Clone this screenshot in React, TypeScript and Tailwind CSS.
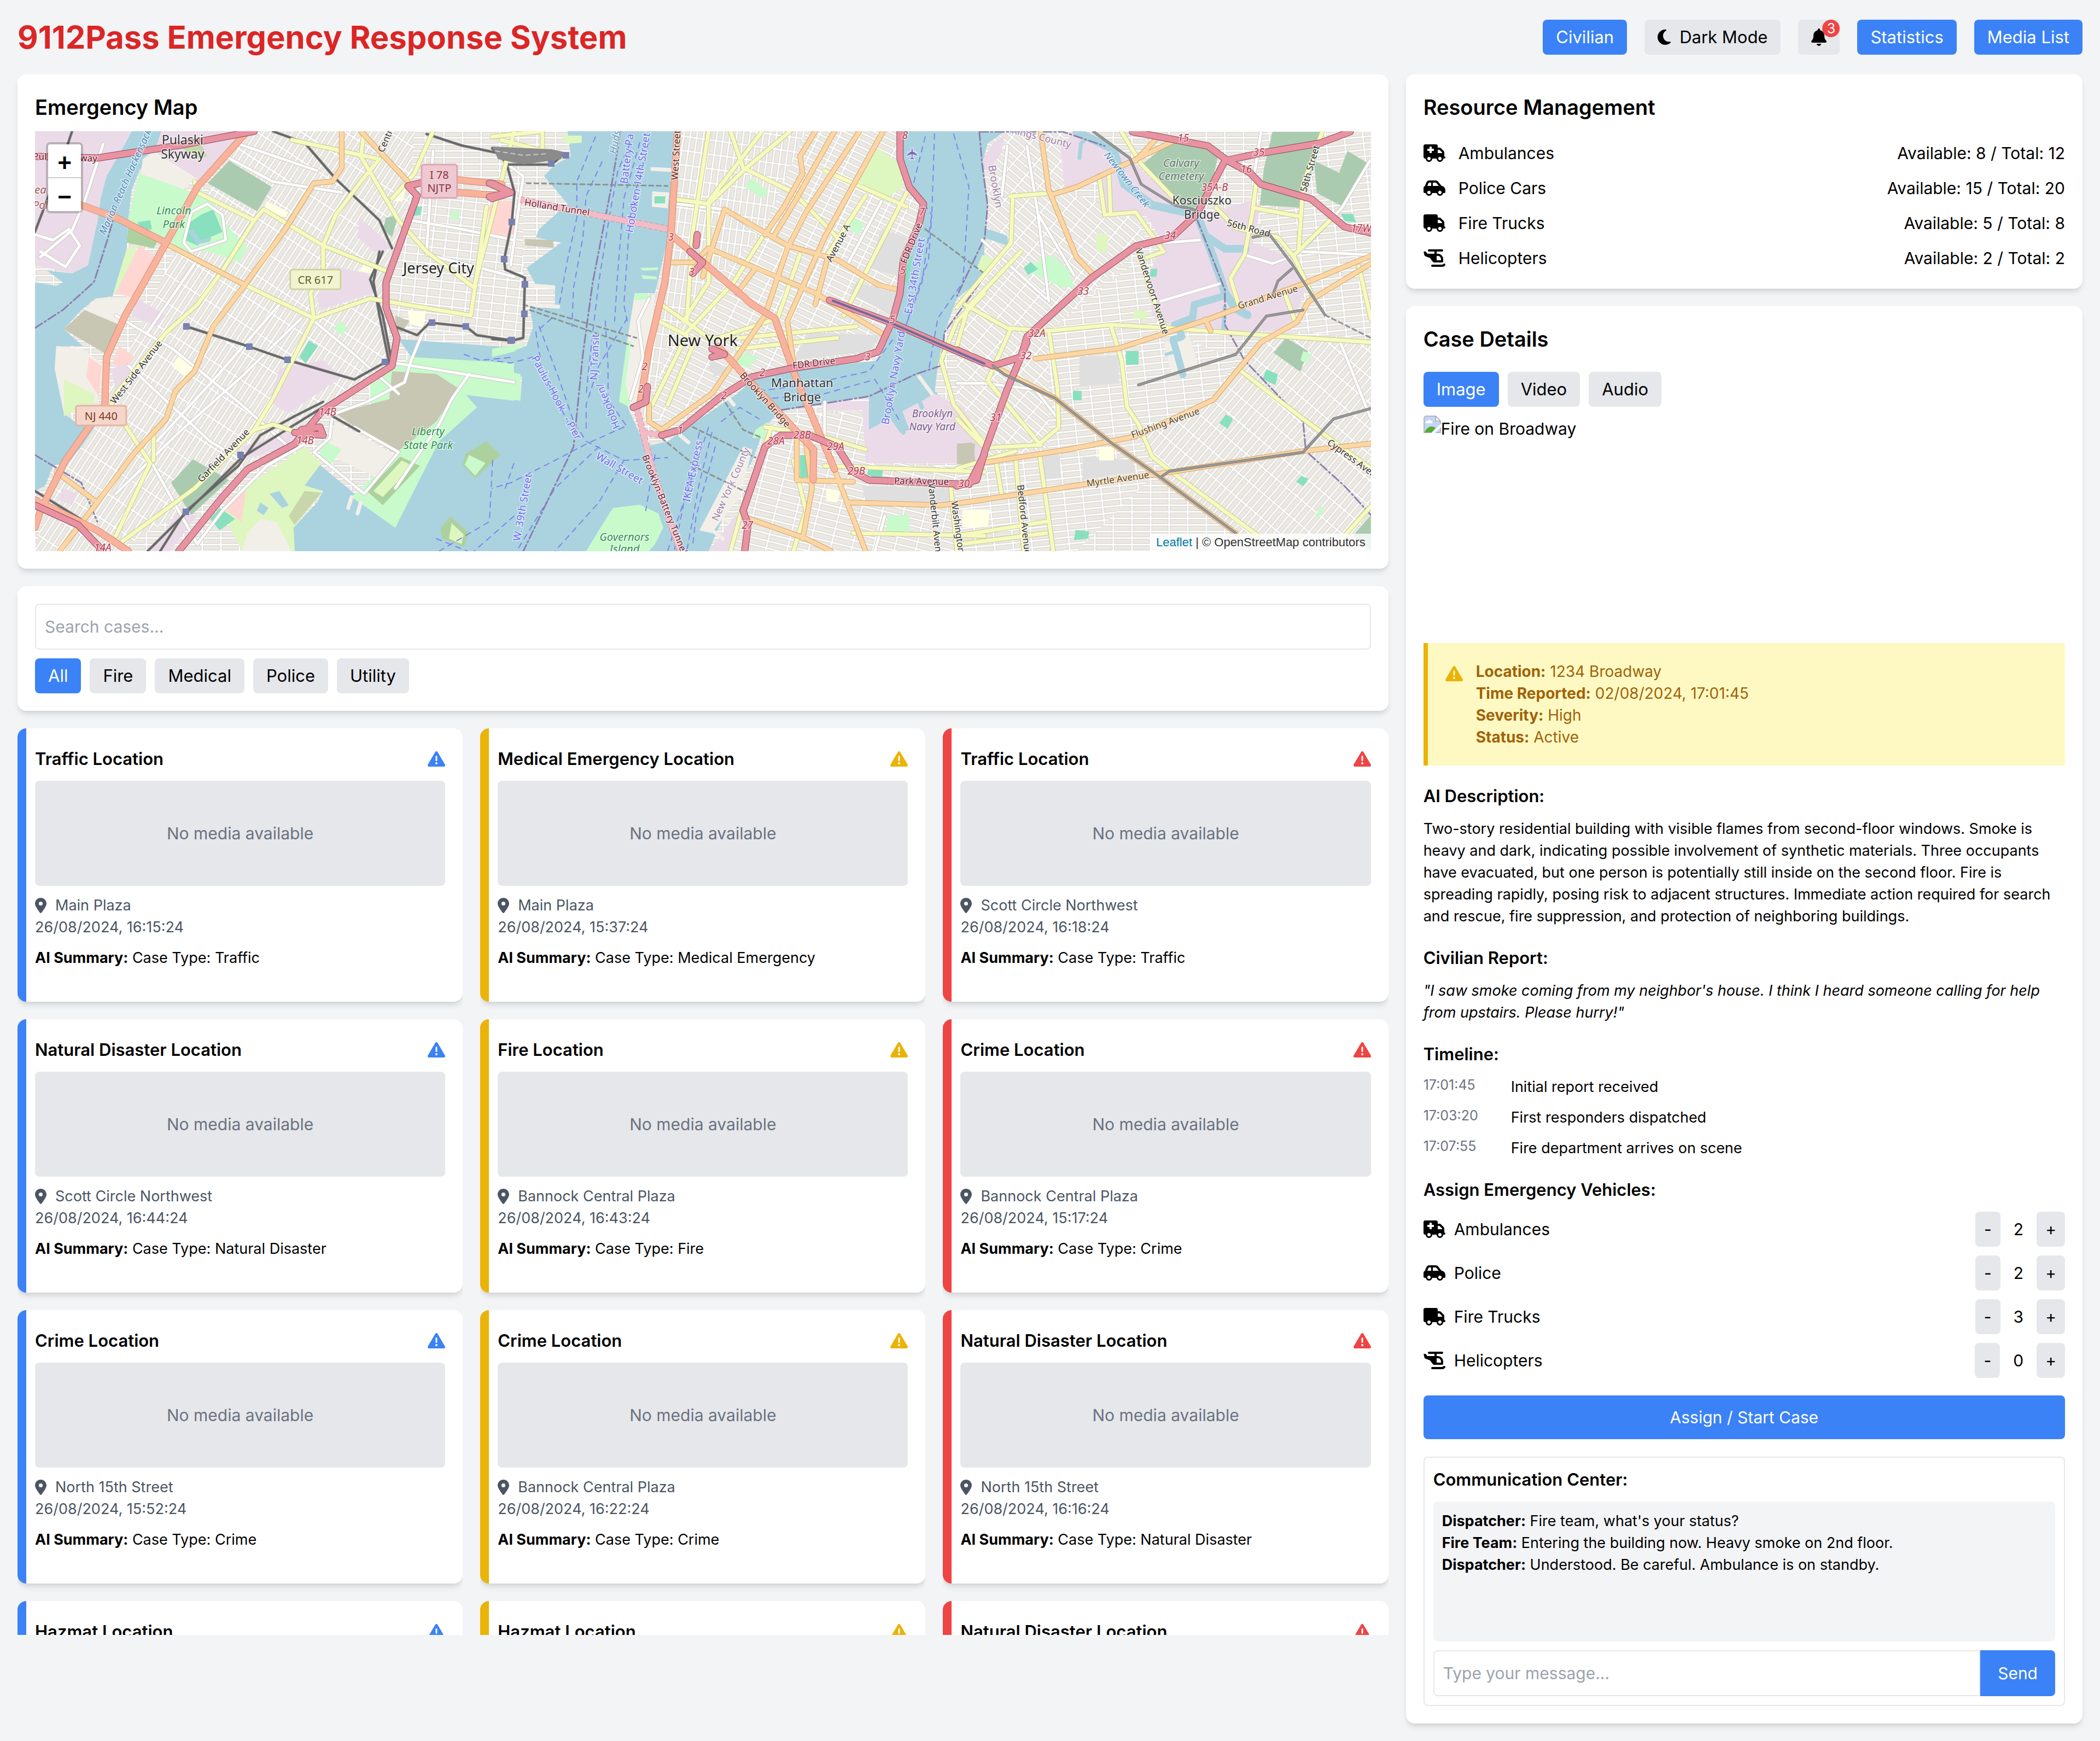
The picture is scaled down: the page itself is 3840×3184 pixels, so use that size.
import { useState } from "react";
import type { ReactNode } from "react";
import {
  FaBell,
  FaCarSide,
  FaHelicopter,
  FaLocationDot,
  FaMoon,
  FaTriangleExclamation,
  FaTruck,
  FaTruckMedical,
} from "react-icons/fa6";

type TileKey = "w" | "c" | "e";

// each tile has its own units, project() puts them on the shared canvas
const TILES = {
  w: { x: -24, y: -10, sx: 0.574, sy: 0.5102 },
  c: { x: 836, y: -10, sx: 0.574, sy: 0.5102 },
  e: { x: 1686, y: -10, sx: 0.5102, sy: 0.5357 },
};

function project(tile: TileKey, points: string) {
  const t = TILES[tile];
  return points
    .split(" ")
    .map((p) => {
      const [x, y] = p.split(",").map(Number);
      return `${Math.round(x * t.sx + t.x)},${Math.round(y * t.sy + t.y)}`;
    })
    .join(" ");
}

const COLORS = {
  water: "#aad3df",
  park: "#c8facc",
  golf: "#def6c0",
  wood: "#add19e",
  cemetery: "#aacbaf",
  industrial: "#ebdbe8",
  brown: "#c7c7b4",
  retail: "#ffd6d1",
  land: "#f2efe9",
  pitch: "#88e0be",
  grey: "#e0dfdf",
  scrub: "#c8d7ab",
  school: "#ffffe5",
};

type Area = [TileKey, keyof typeof COLORS, string];

const DISTRICTS: [TileKey, string, string][] = [
  ["w", "gridJersey", "260,1000 500,420 700,20 1250,20 1240,240 1150,600 1180,860 900,1060 520,1380 300,1525 42,1525 100,1250 240,1070"],
  ["w", "gridDowntown", "1240,240 1568,240 1568,770 1200,720 1160,600"],
  ["c", "gridDowntown", "0,240 100,240 100,780 0,770"],
  ["c", "gridWestSide", "590,20 1000,20 860,380 700,560 560,790 490,1050 440,1000 520,600 560,380"],
  ["c", "gridManhattan", "1000,20 1300,20 1310,200 1370,300 1330,440 1290,700 1230,830 950,850 720,960 560,1060 500,1040 560,790 700,560 860,380"],
  ["c", "gridBrooklyn", "870,1080 960,1040 1180,1020 1190,1200 1568,1230 1568,1525 700,1525 800,1340"],
  ["e", "gridWilliamsburg", "120,20 380,20 400,230 640,300 680,400 330,700 330,1100 0,1160 0,580 100,370"],
  ["e", "gridFlat", "330,700 700,420 760,700 1000,800 920,930 640,1060 720,1180 350,1525 0,1525 0,1160 330,1100"],
  ["e", "gridBushwick", "760,1180 640,1060 920,930 1010,820 1100,720 1484,730 1484,1525 1080,1451 720,1200"],
  ["e", "gridFlat", "1080,20 1484,20 1484,730 1200,700 1180,420 1050,300"],
];

const AREAS: Area[] = [
  // New Jersey side
  ["w", "industrial", "42,20 350,20 325,70 270,180 250,260 240,350 235,370 210,500 160,530 42,500"],
  ["w", "industrial", "445,20 700,20 640,120 560,210 375,160 430,70"],
  ["w", "land", "385,120 420,90 560,190 500,240 380,170"],
  ["w", "scrub", "500,75 570,60 590,110 560,115"],
  ["w", "park", "375,170 545,240 560,200 590,260 620,290 640,340 720,440 690,490 600,450 500,450 350,380 340,330"],
  ["w", "wood", "340,350 440,400 420,440 335,420"],
  ["w", "golf", "335,440 370,430 320,560 290,610"],
  ["w", "pitch", "370,345 410,340 415,370 380,380"],
  ["w", "pitch", "530,350 570,320 610,300 640,380 600,400 560,430 520,410"],
  ["w", "water", "530,380 545,370 570,410 605,400 600,415 560,425"],
  ["w", "cemetery", "660,125 797,220 750,305 592,205"],
  ["w", "retail", "375,430 425,470 350,615 300,600"],
  ["w", "land", "235,620 350,615 315,715 200,660"],
  ["w", "brown", "200,660 315,715 270,820 135,730"],
  ["w", "land", "110,790 195,800 265,860 240,990 135,1030 105,870"],
  ["w", "golf", "135,910 230,960 230,1000 135,1040"],
  ["w", "retail", "215,830 255,860 245,970 205,900"],
  ["w", "retail", "310,790 360,830 320,870 290,850"],
  ["w", "industrial", "285,870 340,850 370,900 300,960"],
  ["w", "industrial", "370,620 460,680 430,720 350,680"],
  ["w", "school", "500,825 552,860 520,900 478,860"],
  ["w", "school", "780,270 850,310 840,330 770,300"],
  ["w", "school", "1090,500 1130,515 1110,530 1070,520"],
  ["w", "industrial", "1075,330 1140,390 1180,440 1120,450 1070,400"],
  ["w", "industrial", "980,500 1100,530 1120,600 950,660 940,610"],
  ["w", "school", "1190,230 1225,220 1215,270 1180,270"],
  ["w", "pitch", "1240,290 1275,290 1270,320 1235,325"],
  ["w", "cemetery", "1160,330 1200,320 1180,400 1150,370"],
  ["w", "park", "1365,305 1395,305 1392,335 1365,335"],
  ["w", "retail", "1490,290 1568,280 1568,390 1485,400"],
  ["w", "park", "1015,700 1040,730 1010,750 995,725"],
  ["w", "pitch", "915,770 945,790 905,850 885,830"],
  ["w", "industrial", "820,870 960,840 1020,900 850,1030 790,990"],
  ["w", "school", "1230,665 1285,665 1280,725 1235,710"],
  ["w", "brown", "1190,680 1235,700 1210,740 1190,730"],
  ["w", "industrial", "700,1150 880,1090 900,1130 730,1190"],
  ["w", "cemetery", "545,1195 660,1270 540,1395 475,1280"],
  ["w", "park", "1110,930 1240,830 1568,850 1568,985 1415,965 1450,1010 1330,1130 1190,1440 1050,1330 1200,1170 1110,1060"],
  ["w", "brown", "1180,880 1320,890 1390,940 1320,1060 1190,1175 1110,1120 1000,1030 1170,980"],
  ["w", "land", "1000,1060 1190,1180 1130,1260 960,1170"],
  ["w", "park", "960,1125 1020,1160 985,1215 950,1180"],
  ["w", "wood", "1205,1185 1268,1220 1150,1360 1100,1310"],
  ["w", "golf", "1210,1200 1245,1220 1150,1330 1120,1310"],
  ["w", "golf", "900,1150 955,1210 900,1290 960,1310 865,1440 870,1525 700,1525 640,1380 720,1290"],
  ["w", "water", "790,1320 820,1310 850,1360 830,1370"],
  ["w", "water", "760,1350 785,1370 770,1395 750,1380"],
  ["w", "scrub", "900,1310 955,1315 870,1430 850,1400"],
  ["w", "retail", "660,1330 715,1310 700,1420 640,1370"],
  ["w", "pitch", "630,1370 680,1410 630,1450 600,1410"],
  ["w", "land", "760,1410 810,1420 860,1525 700,1525 720,1460"],
  ["w", "industrial", "500,1380 560,1400 470,1525 410,1525"],
  ["w", "industrial", "130,1300 180,1320 160,1360 115,1340"],
  ["w", "wood", "1415,1175 1480,1130 1525,1180 1445,1265 1405,1215"],
  ["w", "park", "1425,1180 1478,1210 1445,1255 1412,1215"],
  ["w", "wood", "1365,1400 1425,1460 1410,1510 1340,1480 1335,1440"],
  ["w", "golf", "1370,1425 1408,1465 1400,1500 1360,1480"],
  ["c", "park", "0,870 90,890 90,985 0,970"],
  ["c", "park", "0,800 110,780 70,810 0,830"],
  // Manhattan
  ["c", "golf", "220,35 285,35 285,60 240,65"],
  ["c", "retail", "0,270 70,270 70,390 0,390"],
  ["c", "brown", "105,405 195,410 195,438 105,430"],
  ["c", "land", "510,235 565,240 560,295 508,290"],
  ["c", "pitch", "518,252 553,252 550,278 518,278"],
  ["c", "park", "470,510 530,508 528,518 480,520"],
  ["c", "park", "475,535 525,540 525,550 480,548"],
  ["c", "park", "825,188 880,235 865,260 805,220"],
  ["c", "golf", "1230,80 1300,140 1310,220 1240,270 1160,190"],
  ["c", "park", "1150,325 1185,350 1170,390 1140,375"],
  ["c", "grey", "1160,560 1290,600 1270,680 1140,600"],
  ["c", "grey", "1240,370 1320,400 1300,540 1200,510"],
  ["c", "grey", "1010,740 1240,750 1200,810 960,840"],
  ["c", "land", "455,600 520,605 490,1000 440,1030 415,960 430,770"],
  ["c", "park", "455,600 510,605 505,622 455,625"],
  ["c", "park", "430,770 445,775 425,920 440,1010 405,990 415,900"],
  ["c", "pitch", "1325,460 1338,470 1325,560 1315,560"],
  ["c", "park", "790,810 850,830 810,870 780,850"],
  ["c", "grey", "700,840 760,870 710,900 690,870"],
  ["c", "park", "385,1370 470,1358 530,1390 545,1440 520,1500 500,1525 300,1525 340,1450"],
  // Brooklyn and Queens
  ["c", "park", "840,1090 880,1060 870,1120 830,1120"],
  ["c", "industrial", "1060,990 1200,985 1200,1090 1410,960 1500,1010 1568,1130 1568,1210 1190,1210 1180,1020 1060,1020"],
  ["c", "water", "1330,905 1350,890 1395,960 1375,985"],
  ["c", "water", "1225,980 1290,970 1330,1090 1300,1100"],
  ["c", "brown", "1485,1140 1530,1135 1540,1200 1490,1205"],
  ["c", "pitch", "980,1180 1015,1180 1010,1260 980,1260"],
  ["c", "pitch", "1200,1220 1245,1230 1240,1270 1195,1250"],
  ["c", "park", "1260,1395 1330,1395 1330,1455 1255,1455"],
  ["c", "school", "1065,1300 1110,1310 1100,1350 1065,1345"],
  ["c", "grey", "1180,1290 1460,1300 1470,1350 1190,1350"],
  ["c", "land", "700,1460 660,1450 800,1150 830,1160 790,1330 740,1400"],
  ["c", "industrial", "770,1405 800,1380 760,1525 690,1525"],
  ["e", "industrial", "90,120 130,60 170,30 160,90 110,160"],
  ["e", "industrial", "370,60 420,30 500,30 640,130 800,270 860,310 1040,260 1090,270 1060,400 1200,450 1250,560 1190,700 1000,700 760,680 700,650 690,500 740,400 680,310 530,300 510,170 400,230 385,200"],
  ["e", "cemetery", "770,50 940,80 900,260 830,290 665,130"],
  ["e", "cemetery", "1130,20 1300,20 1285,110 1230,280 1085,270 1100,150"],
  ["e", "cemetery", "1400,85 1478,130 1380,275 1290,230 1280,120 1370,160"],
  ["e", "cemetery", "1180,725 1258,770 1230,840 1135,775"],
  ["e", "cemetery", "1484,1330 1484,1451 1420,1400"],
  ["e", "park", "335,440 400,490 420,550 370,550 240,490"],
  ["e", "pitch", "265,465 290,490 255,510 240,485"],
  ["e", "golf", "90,440 150,460 110,510 70,490"],
  ["e", "golf", "500,370 540,370 540,430 500,430"],
  ["e", "pitch", "695,490 718,488 715,515 690,515"],
  ["e", "golf", "640,630 685,635 680,665 625,655"],
  ["e", "grey", "440,790 580,780 580,880 440,890"],
  ["e", "pitch", "605,770 650,770 650,815 605,815"],
  ["e", "pitch", "415,905 447,905 447,938 415,938"],
  ["e", "grey", "310,1120 370,1125 370,1200 310,1205"],
  ["e", "grey", "450,1130 630,1140 640,1180 450,1210"],
  ["e", "school", "505,1095 563,1095 563,1143 510,1143"],
  ["e", "pitch", "425,1380 475,1385 470,1410 420,1415"],
  ["e", "brown", "0,1085 65,1085 60,1155 0,1155"],
  ["e", "school", "20,1310 120,1310 110,1370 20,1370"],
  ["e", "pitch", "1110,830 1150,850 1140,885 1095,865"],
  ["e", "pitch", "965,985 990,1000 970,1035 940,1015"],
  ["e", "pitch", "1235,1195 1260,1205 1240,1230 1215,1215"],
  ["e", "pitch", "1375,300 1420,300 1430,330 1390,325"],
  ["e", "park", "1240,770 1275,780 1250,810 1230,800"],
  ["e", "park", "1305,1300 1318,1308 1295,1340 1283,1330"],
  ["e", "land", "740,740 835,720 865,820 770,850"],
];

const WATER: [TileKey, string][] = [
  ["w", "350,20 445,20 430,70 400,120 375,160 350,230 340,330 335,440 325,490 290,612 235,620 190,660 135,730 195,790 115,790 105,870 135,900 135,1030 175,1065 235,1075 190,1150 150,1205 100,1220 75,1290 42,1310 42,560 110,575 130,560 80,520 160,530 210,500 235,370 185,315 240,350 250,260 270,180 325,70"],
  ["w", "870,1525 865,1440 940,1350 960,1310 900,1290 910,1240 950,1215 1190,1440 1260,1270 1330,1130 1450,1010 1415,965 1568,985 1568,1525"],
  ["w", "1200,765 1568,795 1568,865 1460,860 1240,830"],
  ["c", "240,20 580,20 565,380 520,600 455,600 440,740 415,920 440,1030 490,1150 560,1130 650,1060 780,960 850,890 1010,870 1230,840 1290,700 1330,440 1375,300 1310,180 1300,20 1568,20 1568,540 1480,620 1440,740 1420,860 1410,960 1200,1090 1200,970 920,1020 870,1080 830,1200 760,1340 690,1525 0,1525 0,980 90,980 95,900 0,870 0,830 110,790 130,720 120,650 200,640 200,580 140,570 110,510 220,420 140,400 150,370 240,280 165,180 200,140 250,110"],
  ["c", "1290,930 1340,890 1420,960 1390,990 1430,1140 1370,1110 1300,1170 1240,1110 1280,1050 1220,1000"],
  ["e", "0,20 170,20 110,60 90,130 110,250 100,350 180,375 185,410 105,385 60,500 0,580"],
  ["w", "460,255 490,255 485,310 460,300"],
];

const CREEKS: [TileKey, number, string][] = [
  ["e", 15, "430,20 560,80 600,200 700,270 860,305 900,400 945,520 960,570 1000,625 1040,645"],
  ["e", 14, "900,380 960,420 1035,420"],
  ["e", 13, "960,580 850,610 845,655 780,680"],
  ["e", 13, "800,700 805,720 775,730 790,780 810,850"],
  ["e", 6, "790,770 750,780"],
  ["e", 8, "960,620 955,700"],
  ["e", 7, "440,110 445,60 470,40"],
  ["c", 8, "1330,900 1370,1010"],
  ["c", 8, "1250,960 1310,1100"],
];

// piers along the Hudson and East River
const PIERS: [TileKey, string][] = [
  ["c", "510,155 575,158"],
  ["c", "100,570 195,578"],
  ["c", "100,640 210,648"],
  ["c", "740,960 770,1000"],
  ["c", "600,1110 625,1135"],
  ["c", "690,1440 735,1480"],
  ["c", "710,1390 755,1420"],
  ["c", "1360,900 1400,960"],
  ["w", "1490,520 1560,540"],
  ["w", "1050,1330 1040,1370"],
  ["w", "1080,1350 1070,1390"],
];

type RoadKind = "motorway" | "trunk" | "primary" | "secondary" | "minor" | "rail" | "tunnel" | "subway";

const ROAD_STYLE: Record<RoadKind, { color: string; casing: string; width: number; dash?: string }> = {
  minor: { color: "#ffffff", casing: "#c9c6c2", width: 5 },
  tunnel: { color: "#f1bcc6", casing: "#e6808f", width: 10, dash: "6 4" },
  rail: { color: "#666666", casing: "#8a8a8a", width: 3 },
  secondary: { color: "#f7fabf", casing: "#c3c98a", width: 7 },
  primary: { color: "#fcd6a4", casing: "#d2a566", width: 8 },
  trunk: { color: "#f9b29c", casing: "#d98a70", width: 11 },
  motorway: { color: "#e892a2", casing: "#8d4a58", width: 11 },
  subway: { color: "#999999", casing: "#7d7d7d", width: 3 },
};

const ROADS: [RoadKind, TileKey, string][] = [
  ["minor", "w", "260,65 200,270 160,375 60,470"],
  ["minor", "w", "42,390 100,410 150,370 185,430 140,505 60,450"],
  ["minor", "w", "680,60 940,160"],
  ["minor", "w", "650,110 800,200 1020,240"],
  ["minor", "w", "560,480 400,740"],
  ["minor", "w", "300,680 480,800 700,1000 850,1150"],
  ["minor", "w", "340,860 600,1130 700,1200"],
  ["minor", "w", "890,690 700,900 500,1100 300,1320"],
  ["minor", "w", "820,640 620,900 430,1130"],
  ["minor", "w", "930,700 1060,820 1200,960"],
  ["minor", "w", "1568,410 1400,370 1240,340"],
  ["minor", "w", "1310,90 1290,460 1568,540"],
  ["minor", "w", "590,280 640,320 650,410 540,450 515,420 540,310 590,280"],
  ["minor", "w", "1000,1030 1100,990 1220,920 1240,840 1290,710"],
  ["minor", "w", "1425,890 1370,980 1330,1070 1190,1300"],
  ["minor", "w", "1190,850 1568,920"],
  ["minor", "w", "990,1030 980,1120 930,1170 1090,1320 1200,1170 1060,1080"],
  ["minor", "w", "410,1200 560,1500"],
  ["minor", "w", "900,1140 780,1220 640,1380 560,1500"],
  ["minor", "c", "60,500 100,180 50,140"],
  ["minor", "c", "590,280 740,300 860,390"],
  ["minor", "c", "1240,270 1130,500"],
  ["minor", "c", "1060,990 1060,1180"],
  ["minor", "c", "1250,1400 1220,1525"],
  ["minor", "c", "500,620 465,700 480,830 440,980"],
  ["minor", "e", "180,70 160,240"],
  ["minor", "e", "250,70 290,300 330,600"],
  ["minor", "e", "290,300 420,510"],
  ["minor", "e", "90,390 320,590"],
  ["minor", "e", "1090,20 1060,200"],
  ["minor", "e", "1370,730 1484,1000"],
  ["minor", "e", "1480,120 1380,280 1230,430 1484,440"],
  ["minor", "e", "1030,440 1130,470 1190,450"],
  ["minor", "e", "740,400 870,390"],
  ["minor", "e", "730,600 940,540"],
  ["minor", "e", "0,880 100,880 280,900 370,1010"],

  ["tunnel", "c", "90,265 330,320 560,370"],
  ["tunnel", "c", "460,1010 480,1100 540,1110"],
  ["tunnel", "c", "480,1100 510,1230 600,1525"],

  ["rail", "w", "160,20 130,120 42,380"],
  ["rail", "w", "800,20 900,60 1000,190 1140,340 1180,440"],
  ["rail", "w", "1150,450 1110,550 1150,680 1180,850 1000,980 700,1190 400,1525"],
  ["rail", "w", "1140,450 1120,560 1140,680 1170,850"],
  ["rail", "w", "525,720 725,792 850,840 1060,910 1157,848"],
  ["rail", "w", "1180,715 1260,750 1300,705 1415,720 1450,750 1568,770"],
  ["rail", "w", "960,990 870,1040 760,1110 690,1220 520,1385 440,1525"],
  ["rail", "w", "1290,30 1400,70 1568,110"],
  ["rail", "w", "42,1310 200,1420 340,1525"],
  ["rail", "w", "990,1040 1075,1095"],
  ["rail", "c", "0,80 50,140 190,140 230,100"],
  ["rail", "c", "47,140 72,240 62,345 38,480 42,515 104,545 100,760 62,770 0,765"],
  ["subway", "e", "490,20 620,110 660,200 780,270 860,290"],
  ["subway", "e", "1060,380 1120,370 1200,470 1320,645"],
  ["subway", "e", "650,885 800,840 1000,780 1110,650 1240,630"],
  ["subway", "e", "1200,490 1150,530 1130,580"],

  ["secondary", "w", "550,200 560,240 740,340 640,520 560,640 460,740 300,960 285,1000 410,1210 300,1470"],
  ["secondary", "w", "740,340 770,300 960,430 1160,520"],
  ["secondary", "w", "860,50 1140,120 1080,200 1000,320 960,430 960,520 920,600 930,690 800,980 740,1090 550,1300 320,1490"],
  ["secondary", "w", "1090,20 1080,110 1200,340 1290,450 1440,580 1568,20"],
  ["secondary", "w", "1310,20 1250,170 1180,260"],
  ["secondary", "w", "710,570 930,690 1110,620 1430,680 1480,290"],
  ["secondary", "w", "740,1090 800,1070 880,1100"],
  ["secondary", "w", "420,1090 420,1200"],
  ["secondary", "c", "0,40 160,20 160,90 30,50"],
  ["secondary", "c", "690,20 640,380 620,700"],
  ["secondary", "c", "760,20 800,150 960,240 1100,400"],
  ["secondary", "c", "860,20 690,270 690,560 610,700"],
  ["secondary", "c", "950,20 810,150 690,280 590,265"],
  ["secondary", "c", "1060,160 1320,290"],
  ["secondary", "c", "1320,240 1120,680"],
  ["secondary", "c", "1190,250 1070,460"],
  ["secondary", "c", "860,400 770,560 620,740"],
  ["secondary", "c", "980,460 910,690 720,760"],
  ["secondary", "c", "540,640 690,760 790,760 1160,720"],
  ["secondary", "c", "530,700 620,750 510,1000"],
  ["secondary", "c", "780,800 1100,760"],
  ["secondary", "c", "650,760 560,1000"],
  ["secondary", "c", "870,1080 1040,1110 1190,1160"],
  ["secondary", "c", "960,1200 1000,1380 960,1525"],
  ["secondary", "c", "1060,1220 1568,1240"],
  ["secondary", "c", "890,1080 800,1360 760,1525"],
  ["secondary", "c", "1150,1460 1568,1470"],
  ["secondary", "c", "1460,1280 1480,1525"],
  ["secondary", "c", "1568,600 1480,700 1430,840 1470,1000 1568,1140"],
  ["secondary", "e", "590,20 660,130 790,260"],
  ["secondary", "e", "190,240 340,230"],
  ["secondary", "e", "200,240 195,400 0,620"],
  ["secondary", "e", "230,430 40,620 0,750"],
  ["secondary", "e", "510,170 530,305 640,295 740,430 680,450"],
  ["secondary", "e", "545,170 550,300"],
  ["secondary", "e", "650,430 700,580 750,700"],
  ["secondary", "e", "30,610 180,690 330,700 550,680 760,690 1100,715 1484,740"],
  ["secondary", "e", "190,700 110,870 300,1090"],
  ["secondary", "e", "330,700 360,900 365,1030 290,1090"],
  ["secondary", "e", "550,680 590,800 610,960 650,1020 700,1130 780,1190 1080,1400"],
  ["secondary", "e", "1075,180 1060,290 1030,440 980,520 1010,610"],
  ["secondary", "e", "930,280 1000,350 1150,380 1210,450 1280,590"],
  ["secondary", "e", "1310,20 1240,200 1225,420"],
  ["secondary", "e", "1060,280 1230,310"],
  ["secondary", "e", "1340,320 1210,440"],
  ["secondary", "e", "1440,480 1484,660"],
  ["secondary", "e", "1010,830 1240,1000 1484,1170"],
  ["secondary", "e", "1484,1300 1380,1410"],
  ["secondary", "e", "1170,560 1210,660"],
  ["secondary", "e", "0,1000 100,1100 290,1090"],
  ["secondary", "e", "0,1170 210,1110"],
  ["secondary", "e", "140,1140 160,1260"],
  ["secondary", "e", "210,1130 240,1451"],
  ["secondary", "e", "295,1120 345,1451"],
  ["secondary", "e", "0,1400 330,1350"],
  ["secondary", "e", "0,1430 320,1390"],

  ["primary", "w", "1020,20 1020,150 990,200 930,205 840,370 710,570 610,720 550,880 490,950 460,1050 360,1170 240,1350 120,1525"],
  ["primary", "w", "470,430 710,570"],
  ["primary", "w", "1080,20 1230,200"],
  ["primary", "w", "110,1240 240,1350"],
  ["primary", "c", "740,300 940,430 1100,480 1230,570 1300,590"],
  ["primary", "c", "740,300 670,540"],
  ["primary", "c", "1030,20 980,110 990,170 930,290 870,390"],
  ["primary", "c", "1090,20 970,260 900,390"],
  ["primary", "c", "1170,20 1000,310 940,440 870,680 700,960 540,1090 500,1060 500,1000"],
  ["primary", "c", "1245,20 1060,400 940,700 960,850"],
  ["primary", "c", "560,490 640,490 690,440 840,510 1030,600 1250,750"],
  ["primary", "c", "840,510 780,600"],
  ["primary", "c", "1070,470 1030,640"],
  ["primary", "c", "970,1120 970,1270 1150,1275"],
  ["primary", "c", "1000,1140 1020,1300 990,1480"],
  ["primary", "c", "820,1410 1000,1480 1080,1525"],
  ["primary", "c", "1090,1230 1190,1525"],
  ["primary", "c", "1140,1350 1430,1360 1568,1340"],
  ["primary", "e", "300,20 330,220 430,450 490,510"],
  ["primary", "e", "780,50 650,110 430,210 340,235"],
  ["primary", "e", "720,40 640,120"],
  ["primary", "e", "1484,445 1240,540 900,660 580,760 280,795"],
  ["primary", "e", "890,660 910,700"],
  ["primary", "e", "1484,470 1260,600 1220,670 1090,740 1010,830 920,935 640,1060 400,1105 100,1150"],
  ["primary", "e", "0,1290 480,1220 720,1190 1240,1110 1484,1085"],
  ["primary", "e", "130,820 350,930 550,1080 730,1200 1000,1390"],

  ["subway", "e", "130,820 170,850 350,930 550,1080 730,1200 1000,1390"],
  ["subway", "e", "730,1200 760,1180 1240,1115 1350,1000 1484,965"],

  ["trunk", "w", "180,280 300,330 460,420 560,220 710,30"],
  ["trunk", "w", "460,420 390,560 330,680 270,830 265,1000 140,1200 60,1380 42,1440"],
  ["trunk", "w", "42,1340 240,1450 340,1525"],
  ["trunk", "w", "1390,195 1530,210"],
  ["trunk", "w", "1390,240 1530,250"],
  ["trunk", "c", "590,20 570,390 550,560 500,800 470,1000"],
  ["trunk", "c", "570,390 830,640 900,690 960,880 1090,1230"],
  ["trunk", "c", "720,790 800,890 980,1110 1025,1160 1022,1270"],

  ["motorway", "w", "42,110 240,115 500,70 740,20"],
  ["motorway", "w", "1290,200 1230,215 1260,250 1160,560 1160,650 1195,760 1180,860 960,1020 870,1140 720,1230 640,1330 500,1525"],
  ["motorway", "w", "870,1100 960,1110 950,1080 890,1090"],
  ["motorway", "w", "42,1360 180,1430 260,1525"],
  ["motorway", "w", "1490,205 1555,240 1490,255"],
  ["motorway", "c", "0,205 60,240 0,260"],
  ["motorway", "c", "630,450 670,490 640,530"],
  ["motorway", "c", "653,390 650,430"],
  ["motorway", "c", "495,935 490,990 450,1010"],
  ["motorway", "c", "700,800 740,820 700,830"],
  ["motorway", "c", "1300,20 1300,120 1330,220 1375,280 1360,350 1310,480 1300,600 1275,700 1230,810 1160,835 950,870 830,900 730,970 600,1090 540,1110"],
  ["motorway", "c", "805,1525 815,1430 800,1380 870,1150 920,1110 1010,1110 1100,1150 1150,1240 1200,1270 1520,1285 1568,1180"],
  ["motorway", "c", "1075,625 1280,710 1568,850"],
  ["motorway", "e", "0,765 130,820 230,790 250,720 480,520 640,410 770,380 860,300 960,120 1080,95 1300,60 1410,20"],
  ["motorway", "e", "630,20 900,70 970,120 1050,160 1090,200 1270,250 1390,345 1484,365"],
  ["motorway", "e", "250,740 180,900 100,1110 70,1210 0,1230"],
];

const FERRIES: [TileKey, string][] = [
  ["c", "330,40 270,200 270,330 240,480 215,640"],
  ["c", "350,130 300,250 290,400 260,580 255,720"],
  ["c", "440,60 400,160 375,320 340,560 320,740 300,960"],
  ["c", "470,60 420,260 400,520 390,700"],
  ["c", "500,60 440,300 420,640 430,700"],
  ["c", "360,700 370,860 370,980 430,1080"],
  ["c", "430,690 340,860 300,1000 300,1100"],
  ["c", "150,720 210,900 260,1060 300,1130 420,1200 560,1190"],
  ["c", "130,830 60,850 0,840"],
  ["c", "190,690 140,740 160,880 240,1060"],
  ["c", "420,1080 300,1140 200,1200 60,1280 0,1300"],
  ["c", "340,1150 200,1300 80,1520"],
  ["c", "420,1200 340,1350 200,1525"],
  ["c", "520,1180 490,1380"],
  ["c", "690,1080 640,1250 580,1450 560,1525"],
  ["c", "700,1100 660,1280 620,1525"],
  ["c", "660,1100 620,1300 580,1525"],
  ["c", "710,1150 650,1400 640,1500"],
  ["c", "730,1060 790,1010 850,1050"],
  ["c", "850,950 1000,930 1200,880 1280,760"],
  ["c", "860,980 1060,960 1220,910 1300,1060"],
  ["c", "1380,40 1340,220 1400,320 1390,480 1310,740"],
  ["c", "1410,30 1400,320 1370,560 1310,740"],
  ["c", "1470,30 1520,220 1500,560 1420,690 1390,880"],
  ["w", "1500,1200 1490,1420 1330,1525"],
  ["w", "1540,1300 1568,1210"],
  ["w", "1410,820 1460,840 1568,830"],
  ["w", "1320,1480 1420,1525"],
  ["w", "1568,1400 1440,1525"],
];

const BORDERS: [TileKey, string][] = [
  ["c", "410,20 380,220 320,560 290,820 260,1150 100,1525"],
  ["w", "42,725 130,660 230,560 275,400 300,300"],
  ["w", "42,1180 190,1280 240,1420"],
  ["c", "920,1020 1200,970 1350,890 1430,860 1440,740 1568,540"],
  ["e", "80,20 90,130 110,270 100,380 0,580"],
  ["e", "80,20 200,20 380,20 530,70"],
  ["e", "860,320 960,560 960,680 1030,800 1240,1010 1250,1110 1390,1230 1484,1330"],
];

const PATHS: [TileKey, string][] = [
  ["c", "110,205 560,215"],
  ["c", "100,640 460,760"],
  ["c", "120,660 450,790"],
  ["c", "1380,370 1568,530"],
  ["c", "540,1120 660,1230 820,1320"],
  ["c", "640,1080 840,1190"],
  ["c", "730,970 800,1090 860,1120"],
  ["e", "1320,645 1484,725"],
];

const STATIONS: [TileKey, string][] = [
  ["w", "525,720"], ["w", "725,792"], ["w", "846,838"], ["w", "1157,846"], ["w", "1307,705"],
  ["w", "1415,720"], ["w", "1558,770"], ["w", "697,1180"], ["w", "522,1384"],
  ["c", "63,345"], ["c", "38,478"], ["c", "104,568"], ["c", "102,674"], ["c", "62,768"],
  ["c", "188,136"], ["c", "236,105"],
];

// tile, anchor, text, size, colour, rotation, italic
type MapLabel = [TileKey, string, string, number, string, number, boolean?];

const LABELS: MapLabel[] = [
  ["w", "513,66", "Pulaski", 23, "#333", 0],
  ["w", "513,118", "Skyway", 23, "#333", 0],
  ["w", "212,128", "way", 17, "#6b2233", 2],
  ["w", "58,122", "Pul", 17, "#6b2233", 0],
  ["w", "340,205", "Marion Reach Hackensack", 18, "#4f8bbd", -66, true],
  ["w", "484,318", "Lincoln", 20, "#2e9050", 0, true],
  ["w", "484,366", "Park", 20, "#2e9050", 0, true],
  ["w", "60,244", "ea", 20, "#a45a5a", 0, true],
  ["w", "60,298", "Pol", 20, "#a45a5a", 0, true],
  ["w", "1328,530", "Jersey City", 27, "#222", 0],
  ["w", "372,890", "West Side Avenue", 17, "#333", -52],
  ["w", "650,1190", "Garfield Avenue", 17, "#333", -46],
  ["w", "974,1038", "14B", 19, "#b8384f", 0, true],
  ["w", "902,1140", "14B", 19, "#b8384f", 0, true],
  ["w", "258,1525", "14A", 19, "#b8384f", 0, true],
  ["w", "1294,1110", "Liberty", 20, "#2e9050", 0, true],
  ["w", "1294,1158", "State Park", 20, "#2e9050", 0, true],
  ["w", "1168,58", "Centr", 17, "#333", -66],
  ["c", "206,303", "Holland Tunnel", 17, "#6b2233", 9],
  ["c", "402,60", "Huds", 19, "#6f9fc0", -80, true],
  ["c", "440,120", "Battery Pa", 19, "#6c6cf0", -83],
  ["c", "476,205", "Hoboken 14th Street", 19, "#6c6cf0", -80],
  ["c", "596,105", "West Street", 17, "#5a2d22", -87],
  ["c", "1112,425", "Avenue A", 17, "#333", -62],
  ["c", "1345,425", "FDR Drive", 17, "#6b2233", -68],
  ["c", "1358,540", "East 34th Street", 19, "#6c6cf0", -80],
  ["c", "1290,905", "Brooklyn Navy Yard", 19, "#6c6cf0", -80],
  ["c", "670,790", "New York", 29, "#222", 0],
  ["c", "988,936", "Manhattan", 22, "#333", 0],
  ["c", "988,988", "Bridge", 22, "#333", 0],
  ["c", "1026,862", "FDR Drive", 17, "#6b2233", -7],
  ["c", "862,990", "Brooklyn Bridge", 17, "#5a2d22", 48],
  ["c", "540,1360", "Brooklyn-Battery Tunnel", 17, "#6b2233", 68],
  ["c", "170,930", "Paulus Hook", 19, "#6c6cf0", 62],
  ["c", "248,1090", "- Pier", 19, "#6c6cf0", 60],
  ["c", "380,1000", "Hoboken/", 19, "#6c6cf0", -112],
  ["c", "338,830", "NJ Transit", 19, "#6c6cf0", -88],
  ["c", "400,1238", "Wall Street", 19, "#6c6cf0", 30],
  ["c", "108,1370", "W. 39th Street", 19, "#6c6cf0", -80],
  ["c", "650,1240", "IKEA Express", 19, "#6c6cf0", -78],
  ["c", "770,1290", "New York County", 18, "#a07fa8", -66],
  ["c", "422,1488", "Governors", 20, "#2e9050", 0, true],
  ["c", "422,1530", "Island", 20, "#2e9050", 0, true],
  ["c", "1403,1045", "Brooklyn", 19, "#7d5f8c", 0, true],
  ["c", "1403,1092", "Navy Yard", 19, "#7d5f8c", 0, true],
  ["c", "1368,1286", "Park Avenue", 17, "#6b2233", 1],
  ["c", "1400,1405", "Vanderbilt Aven", 17, "#333", 84],
  ["c", "1474,1440", "Washington", 17, "#333", 82],
  ["c", "904,1142", "28A", 19, "#b8384f", 0, true],
  ["c", "988,1122", "28B", 19, "#b8384f", 0, true],
  ["c", "1094,1162", "29A", 19, "#b8384f", 0, true],
  ["c", "1160,1250", "29B", 19, "#b8384f", 0, true],
  ["c", "1504,1296", "30", 19, "#b8384f", 0, true],
  ["c", "814,1444", "27", 19, "#b8384f", 0, true],
  ["c", "486,876", "2", 19, "#b8384f", 0, true],
  ["c", "474,956", "2", 19, "#b8384f", 0, true],
  ["c", "738,980", "2", 19, "#b8384f", 0, true],
  ["c", "860,898", "2", 19, "#b8384f", 0, true],
  ["c", "600,1106", "1", 19, "#b8384f", 0, true],
  ["c", "570,412", "3", 19, "#b8384f", 0, true],
  ["c", "636,538", "3", 19, "#b8384f", 0, true],
  ["c", "1196,840", "3", 19, "#b8384f", 0, true],
  ["c", "1276,708", "5", 19, "#b8384f", 0, true],
  ["c", "1308,532", "5", 19, "#b8384f", 0, true],
  ["c", "1370,322", "7", 19, "#b8384f", 0, true],
  ["c", "1316,48", "8", 19, "#b8384f", 0, true],
  ["c", "1356,100", "✈", 28, "#8461c4", -90],
  ["e", "300,50", "Kings County", 18, "#a07fa8", 14],
  ["e", "125,210", "Brooklyn", 19, "#a07fa8", 80],
  ["e", "600,190", "Newtown Creek", 18, "#4f8bbd", 52, true],
  ["e", "804,140", "Calvary", 20, "#60796a", 0, true],
  ["e", "804,184", "Cemetery", 20, "#60796a", 0, true],
  ["e", "878,268", "Kosciuszko", 21, "#333", 0],
  ["e", "878,318", "Bridge", 21, "#333", 0],
  ["e", "1042,360", "56th Road", 17, "#333", 15],
  ["e", "1276,150", "58th Street", 17, "#333", -74],
  ["e", "690,570", "Vandervoort Avenue", 17, "#333", 72],
  ["e", "1118,596", "Grand Avenue", 17, "#5c4423", -17],
  ["e", "750,1025", "Flushing Avenue", 17, "#5c4423", -20],
  ["e", "578,1218", "Myrtle Avenue", 17, "#5c4423", -8],
  ["e", "1410,1145", "Cypress Aven", 17, "#333", 36],
  ["e", "230,1345", "Bedford Avenue", 17, "#333", 84],
  ["e", "812,54", "15", 19, "#b8384f", 0, true],
  ["e", "1082,102", "35", 19, "#b8384f", 0, true],
  ["e", "1036,160", "16", 19, "#b8384f", 0, true],
  ["e", "924,222", "35A-B", 19, "#b8384f", 0, true],
  ["e", "764,386", "34", 19, "#b8384f", 0, true],
  ["e", "452,576", "33", 19, "#b8384f", 0, true],
  ["e", "286,720", "32A", 19, "#b8384f", 0, true],
  ["e", "246,798", "32", 19, "#b8384f", 0, true],
  ["e", "140,1008", "31", 19, "#b8384f", 0, true],
  ["e", "1448,362", "17W", 19, "#b8384f", 0, true],
];

const STREET_GRIDS = [
  { id: "gridBase", angle: 0, w: 34, h: 12 },
  { id: "gridJersey", angle: -57, w: 44, h: 11 },
  { id: "gridDowntown", angle: 6, w: 24, h: 15 },
  { id: "gridWestSide", angle: -82, w: 26, h: 12 },
  { id: "gridManhattan", angle: 26, w: 34, h: 12 },
  { id: "gridBrooklyn", angle: 14, w: 38, h: 13 },
  { id: "gridWilliamsburg", angle: 40, w: 32, h: 12 },
  { id: "gridFlat", angle: -6, w: 34, h: 12 },
  { id: "gridBushwick", angle: -50, w: 36, h: 12 },
];

function Shield({ x, y, w, lines, fill, stroke, color }: {
  x: number;
  y: number;
  w: number;
  lines: string[];
  fill: string;
  stroke: string;
  color: string;
}) {
  return (
    <g>
      <rect x={x} y={y} width={w} height={lines.length * 25 + 11} rx={4} fill={fill} stroke={stroke} strokeWidth={3} />
      {lines.map((line, i) => (
        <text key={line} x={x + w / 2} y={y + 26 + i * 24} fontSize={20} textAnchor="middle" fill={color}>
          {line}
        </text>
      ))}
    </g>
  );
}

function CityMap() {
  return (
    <svg
      viewBox="0 0 2443 768"
      preserveAspectRatio="xMidYMid slice"
      className="block h-full w-full"
      fontFamily='"Noto Sans", sans-serif'
      role="img"
      aria-label="Map of New York and Jersey City"
    >
      <defs>
        {STREET_GRIDS.map((g) => (
          <pattern
            key={g.id}
            id={g.id}
            width={g.w}
            height={g.h}
            patternUnits="userSpaceOnUse"
            patternTransform={`rotate(${g.angle})`}
          >
            <rect width={g.w} height={g.h} fill="#fff" />
            <rect x={2} y={2} width={g.w - 4} height={g.h - 4} fill="#ece9e3" stroke="#d0cdc9" strokeWidth={1} />
          </pattern>
        ))}
      </defs>

      <rect width={2443} height={768} fill={COLORS.land} />
      <rect width={2443} height={768} fill="url(#gridBase)" />
      {DISTRICTS.map(([tile, grid, points]) => (
        <polygon key={points} points={project(tile, points)} fill={`url(#${grid})`} />
      ))}
      {WATER.map(([tile, points]) => (
        <polygon key={points} points={project(tile, points)} fill={COLORS.water} />
      ))}
      {AREAS.map(([tile, kind, points]) => (
        <polygon key={points} points={project(tile, points)} fill={COLORS[kind]} />
      ))}

      <g fill="none" strokeLinejoin="round" strokeLinecap="round">
        {PIERS.map(([tile, points]) => (
          <polyline key={points} points={project(tile, points)} stroke={COLORS.land} strokeWidth={7} />
        ))}
        {CREEKS.map(([tile, width, points]) => (
          <polyline key={points} points={project(tile, points)} stroke={COLORS.water} strokeWidth={width} />
        ))}
        {FERRIES.map(([tile, points]) => (
          <polyline key={points} points={project(tile, points)} stroke="#7d86ee" strokeWidth={2} strokeDasharray="10 9" />
        ))}
        {PATHS.map(([tile, points]) => (
          <polyline key={points} points={project(tile, points)} stroke="#8d9396" strokeWidth={3} strokeDasharray="8 6" />
        ))}
        {BORDERS.map(([tile, points]) => (
          <polyline key={points} points={project(tile, points)} stroke="#8d7fae" strokeWidth={3} strokeDasharray="16 5 3 5" />
        ))}
        {(Object.keys(ROAD_STYLE) as RoadKind[]).map((kind) => {
          const style = ROAD_STYLE[kind];
          const roads = ROADS.filter((r) => r[0] === kind);
          return (
            <g key={kind} strokeLinecap={style.dash ? "butt" : "round"}>
              {roads.map(([, tile, points]) => (
                <polyline
                  key={points}
                  points={project(tile, points)}
                  stroke={style.casing}
                  strokeWidth={style.width + 2}
                  strokeDasharray={style.dash}
                />
              ))}
              {roads.map(([, tile, points]) => (
                <polyline key={points} points={project(tile, points)} stroke={style.color} strokeWidth={style.width} />
              ))}
            </g>
          );
        })}
        {/* Williamsburg Bridge tracks */}
        <polyline points={project("c", "1085,628 1280,712 1568,852")} stroke="#6a6a9c" strokeWidth={4} />
      </g>

      {/* rail yard next to the terminal */}
      <polygon points={project("c", "0,75 190,85 230,95 220,120 100,140 20,120")} fill="#8b8b8b" />
      <polyline points={project("c", "10,90 100,105 180,100")} fill="none" stroke="#c9c9c9" strokeWidth={2} strokeDasharray="9 5" />
      {STATIONS.map(([tile, point]) => {
        const [x, y] = project(tile, point).split(",").map(Number);
        return <rect key={tile + point} x={x - 6} y={y - 6} width={12} height={12} fill="#7981b0" />;
      })}

      {LABELS.map(([tile, point, text, size, color, angle, italic]) => {
        const [x, y] = project(tile, point).split(",").map(Number);
        return (
          <text
            key={tile + point}
            x={x}
            y={y}
            fontSize={size}
            fill={color}
            stroke="#ffffff"
            strokeOpacity={0.6}
            strokeWidth={3}
            paintOrder="stroke"
            textAnchor="middle"
            fontStyle={italic ? "italic" : "normal"}
            transform={`rotate(${angle} ${x} ${y})`}
          >
            {text}
          </text>
        );
      })}

      <Shield x={467} y={253} w={92} lines={["CR 617"]} fill="#f2f4cf" stroke="#cfd39f" color="#5b5e2e" />
      <Shield x={707} y={61} w={65} lines={["I 78", "NJTP"]} fill="#eec9d1" stroke="#dfa5b1" color="#8a3345" />
      <Shield x={75} y={502} w={92} lines={["NJ 440"]} fill="#f6d6cb" stroke="#e6b3a2" color="#7a3a2a" />
    </svg>
  );
}

function Card({ className = "", children }: { className?: string; children: ReactNode }) {
  return (
    <section
      className={`rounded-2xl bg-white p-8 shadow-[0_8px_12px_-2px_rgba(0,0,0,0.1),0_4px_8px_-4px_rgba(0,0,0,0.1)] ${className}`}
    >
      {children}
    </section>
  );
}

function Pill({ active, onClick, children }: { active?: boolean; onClick?: () => void; children: ReactNode }) {
  return (
    <button
      type="button"
      onClick={onClick}
      className={`flex h-16 items-center gap-4 rounded-lg px-6 text-[31px] ${active ? "bg-[#3b82f6] text-white" : "bg-[#e5e7eb]"}`}
    >
      {children}
    </button>
  );
}

function SectionTitle({ children }: { children: ReactNode }) {
  return <h3 className="mb-4 text-[31px] font-semibold">{children}</h3>;
}

// one column per severity
const COLUMNS = [
  {
    border: "border-[#3b82f6]",
    text: "text-[#3b82f6]",
    cases: [
      { title: "Traffic", place: "Main Plaza", time: "16:15:24" },
      { title: "Natural Disaster", place: "Scott Circle Northwest", time: "16:44:24" },
      { title: "Crime", place: "North 15th Street", time: "15:52:24" },
      { title: "Hazmat", place: "Main Plaza", time: "16:02:24" },
    ],
  },
  {
    border: "border-[#eab308]",
    text: "text-[#eab308]",
    cases: [
      { title: "Medical Emergency", place: "Main Plaza", time: "15:37:24" },
      { title: "Fire", place: "Bannock Central Plaza", time: "16:43:24" },
      { title: "Crime", place: "Bannock Central Plaza", time: "16:22:24" },
      { title: "Hazmat", place: "North 15th Street", time: "15:48:24" },
    ],
  },
  {
    border: "border-[#ef4444]",
    text: "text-[#ef4444]",
    cases: [
      { title: "Traffic", place: "Scott Circle Northwest", time: "16:18:24" },
      { title: "Crime", place: "Bannock Central Plaza", time: "15:17:24" },
      { title: "Natural Disaster", place: "North 15th Street", time: "16:16:24" },
      { title: "Natural Disaster", place: "Main Plaza", time: "16:31:24" },
    ],
  },
];

interface CaseCardProps {
  title: string;
  place: string;
  time: string;
  border: string;
  text: string;
}

function CaseCard({ title, place, time, border, text }: CaseCardProps) {
  return (
    <article
      className={`shrink-0 rounded-2xl border-l-[16px] bg-white py-8 pr-8 pl-4 shadow-[0_8px_12px_-2px_rgba(0,0,0,0.1),0_4px_8px_-4px_rgba(0,0,0,0.1)] ${border}`}
    >
      <div className="mb-4 flex items-center justify-between">
        <h3 className="text-[31px] font-semibold">{title} Location</h3>
        <FaTriangleExclamation className={`size-8 ${text}`} />
      </div>
      <div className="mb-4 flex h-48 items-center justify-center rounded-lg bg-[#e5e7eb] text-[#6b7280]">
        No media available
      </div>
      <div className="mb-4 text-[27px] leading-10 text-[#4b5563]">
        <p className="flex items-center gap-4">
          <FaLocationDot className="h-7 w-[21px]" />
          {place}
        </p>
        <p>26/08/2024, {time}</p>
      </div>
      <p className="min-h-[68px] text-[27px] leading-10">
        <strong>AI Summary:</strong> Case Type: {title}
      </p>
    </article>
  );
}

const RESOURCES = [
  { name: "Ambulances", icon: FaTruckMedical, available: 8, total: 12 },
  { name: "Police Cars", icon: FaCarSide, available: 15, total: 20 },
  { name: "Fire Trucks", icon: FaTruck, available: 5, total: 8 },
  { name: "Helicopters", icon: FaHelicopter, available: 2, total: 2 },
];

const VEHICLES = [
  { name: "Ambulances", icon: FaTruckMedical },
  { name: "Police", icon: FaCarSide },
  { name: "Fire Trucks", icon: FaTruck },
  { name: "Helicopters", icon: FaHelicopter },
];

const TIMELINE = [
  { time: "17:01:45", event: "Initial report received" },
  { time: "17:03:20", event: "First responders dispatched" },
  { time: "17:07:55", event: "Fire department arrives on scene" },
];

function BrokenImage() {
  return (
    <svg viewBox="0 0 32 32" className="size-8 shrink-0" aria-hidden="true">
      <path d="M1 5a4 4 0 0 1 4-4h17l9 9v21H1z" fill="#c5d6f5" stroke="#a3a8ae" strokeWidth="1.5" />
      <path d="M22 1v9h9z" fill="#fff" stroke="#a3a8ae" strokeWidth="1.5" />
      <path d="M4 14a3 3 0 0 1 3-4 4 4 0 0 1 7 0 3 3 0 0 1 2 4z" fill="#fff" />
      <path d="M2 31c3-7 7-11 12-11 4 0 6 1 8 3l-7 8z" fill="#54ab33" />
      <path d="M14 32L32 15v6L21 32z" fill="#fff" />
    </svg>
  );
}

export default function App() {
  const [filter, setFilter] = useState("All");
  const [media, setMedia] = useState("Image");
  const [counts, setCounts] = useState([2, 2, 3, 0]);

  const changeCount = (index: number, delta: number) => {
    setCounts(counts.map((c, i) => (i === index ? Math.max(0, c + delta) : c)));
  };

  return (
    <div className="min-h-screen bg-[#f3f4f6] p-8 font-[Inter,sans-serif] text-[30px] leading-[48px] text-black">
      <header className="mb-8 flex items-center justify-between">
        <h1 className="text-[58px] leading-[72px] font-bold text-[#dc2626]">9112Pass Emergency Response System</h1>
        <div className="flex items-center gap-8">
          <Pill active>Civilian</Pill>
          <Pill>
            <FaMoon className="h-8 w-6" />
            Dark Mode
          </Pill>
          <div className="relative">
            <button type="button" aria-label="Notifications" className="flex h-16 items-center rounded-lg bg-[#e5e7eb] px-6">
              <FaBell className="h-8 w-7" />
            </button>
            <span className="absolute top-0 right-0 flex size-8 items-center justify-center rounded-full bg-[#ef4444] text-[25px] leading-8 text-white">
              3
            </span>
          </div>
          <Pill active>Statistics</Pill>
          <Pill active>Media List</Pill>
        </div>
      </header>

      <main className="grid grid-cols-3 items-start gap-8">
        <div className="col-span-2 flex flex-col gap-8">
          <Card>
            <h2 className="mb-4 text-[38px] leading-[56px] font-semibold">Emergency Map</h2>
            <div className="relative h-[768px] overflow-hidden">
              <CityMap />
              <div className="absolute top-5 left-5 flex flex-col rounded-lg border-4 border-black/20 bg-clip-padding font-['Liberation_Sans',sans-serif] text-[44px] leading-[52px] font-bold">
                <button type="button" aria-label="Zoom in" className="h-[62px] w-[60px] rounded-t-sm border-b-2 border-[#ccc] bg-white pt-2">
                  +
                </button>
                <button type="button" aria-label="Zoom out" className="h-[60px] w-[60px] rounded-b-sm bg-white pt-2">
                  −
                </button>
              </div>
              <div className="absolute right-0 bottom-0 bg-white/80 px-[10px] font-['Liberation_Sans',sans-serif] text-[22px] leading-8 text-[#333]">
                <a href="#leaflet" className="text-[#0078a8]">
                  Leaflet
                </a>{" "}
                | © OpenStreetMap contributors
              </div>
            </div>
          </Card>

          <Card>
            <input
              type="text"
              aria-label="Search cases"
              placeholder="Search cases..."
              className="mb-4 block h-[84px] w-full rounded-lg border-2 border-[#e5e7eb] px-4 placeholder:text-[#9ca3af]"
            />
            <div className="flex gap-4">
              {["All", "Fire", "Medical", "Police", "Utility"].map((name) => (
                <Pill key={name} active={filter === name} onClick={() => setFilter(name)}>
                  {name}
                </Pill>
              ))}
            </div>
          </Card>

          <div className="grid grid-cols-3 gap-8">
            {COLUMNS.map(({ border, text, cases }) => (
              <div key={border} className="flex max-h-[1658px] flex-col gap-8 overflow-y-auto [scrollbar-width:none]">
                {cases.map((item) => (
                  <CaseCard key={item.time} {...item} border={border} text={text} />
                ))}
              </div>
            ))}
          </div>
        </div>

        <div className="flex flex-col gap-8">
          <Card>
            <h2 className="mb-8 text-[38px] leading-[56px] font-semibold">Resource Management</h2>
            <ul className="flex flex-col gap-4">
              {RESOURCES.map(({ name, icon: Icon, available, total }) => (
                <li key={name} className="flex items-center">
                  <Icon className="mr-6 h-8 w-10" />
                  <span>{name}</span>
                  <span className="ml-auto">
                    Available: {available} / Total: {total}
                  </span>
                </li>
              ))}
            </ul>
          </Card>

          <Card>
            <h2 className="mb-8 text-[38px] leading-[56px] font-semibold">Case Details</h2>
            <div className="mb-4 flex gap-4">
              {["Image", "Video", "Audio"].map((name) => (
                <Pill key={name} active={media === name} onClick={() => setMedia(name)}>
                  {name}
                </Pill>
              ))}
            </div>
            <div className="mb-8 flex h-96 items-start">
              <BrokenImage />
              <span>Fire on Broadway</span>
            </div>

            <div className="mb-8 flex items-start gap-6 border-l-8 border-[#eab308] bg-[#fef9c3] p-8 text-[28px] leading-10 text-[#a16207]">
              <FaTriangleExclamation className="mt-2 size-8 text-[#eab308]" />
              <div>
                <p><strong>Location:</strong> 1234 Broadway</p>
                <p><strong>Time Reported:</strong> 02/08/2024, 17:01:45</p>
                <p><strong>Severity:</strong> High</p>
                <p><strong>Status:</strong> Active</p>
              </div>
            </div>

            <SectionTitle>AI Description:</SectionTitle>
            <p className="mb-8 text-[27px] leading-10">
              Two-story residential building with visible flames from second-floor windows. Smoke is heavy and dark,
              indicating possible involvement of synthetic materials. Three occupants have evacuated, but one person is
              potentially still inside on the second floor. Fire is spreading rapidly, posing risk to adjacent
              structures. Immediate action required for search and rescue, fire suppression, and protection of
              neighboring buildings.
            </p>

            <SectionTitle>Civilian Report:</SectionTitle>
            <p className="mb-8 text-[27px] leading-10 italic">
              "I saw smoke coming from my neighbor's house. I think I heard someone calling for help from upstairs.
              Please hurry!"
            </p>

            <SectionTitle>Timeline:</SectionTitle>
            <ul className="mb-8 flex flex-col gap-4">
              {TIMELINE.map(({ time, event }) => (
                <li key={time} className="flex items-start text-[27px] leading-10">
                  <span className="w-40 text-[25px] leading-8 text-[#6b7280]">{time}</span>
                  <span>{event}</span>
                </li>
              ))}
            </ul>

            <SectionTitle>Assign Emergency Vehicles:</SectionTitle>
            <ul className="mb-8 flex flex-col gap-4">
              {VEHICLES.map(({ name, icon: Icon }, i) => (
                <li key={name} className="flex items-center">
                  <Icon className="mr-4 h-8 w-10" />
                  <span>{name}</span>
                  <div className="ml-auto flex items-center gap-6">
                    <button
                      type="button"
                      aria-label={`Remove ${name}`}
                      onClick={() => changeCount(i, -1)}
                      className="h-16 rounded-lg bg-[#e5e7eb] px-4"
                    >
                      -
                    </button>
                    <span>{counts[i]}</span>
                    <button
                      type="button"
                      aria-label={`Add ${name}`}
                      onClick={() => changeCount(i, 1)}
                      className="h-16 rounded-lg bg-[#e5e7eb] px-4"
                    >
                      +
                    </button>
                  </div>
                </li>
              ))}
            </ul>

            <button type="button" className="mb-8 block h-20 w-full rounded-lg bg-[#3b82f6] text-white">
              Assign / Start Case
            </button>

            <div className="rounded-lg border-2 border-[#e5e7eb] p-4">
              <SectionTitle>Communication Center:</SectionTitle>
              <div className="mb-4 h-64 overflow-y-auto rounded-lg bg-[#f3f4f6] p-4 text-[27px] leading-10">
                <p><strong>Dispatcher:</strong> Fire team, what's your status?</p>
                <p><strong>Fire Team:</strong> Entering the building now. Heavy smoke on 2nd floor.</p>
                <p><strong>Dispatcher:</strong> Understood. Be careful. Ambulance is on standby.</p>
              </div>
              <form className="flex h-[84px]" onSubmit={(e) => e.preventDefault()}>
                <input
                  type="text"
                  aria-label="Message"
                  placeholder="Type your message..."
                  className="min-w-0 flex-1 rounded-l-lg border-2 border-[#e5e7eb] px-4 placeholder:text-[#9ca3af]"
                />
                <button type="submit" className="rounded-r-lg bg-[#3b82f6] px-8 text-white">
                  Send
                </button>
              </form>
            </div>
          </Card>
        </div>
      </main>
    </div>
  );
}
